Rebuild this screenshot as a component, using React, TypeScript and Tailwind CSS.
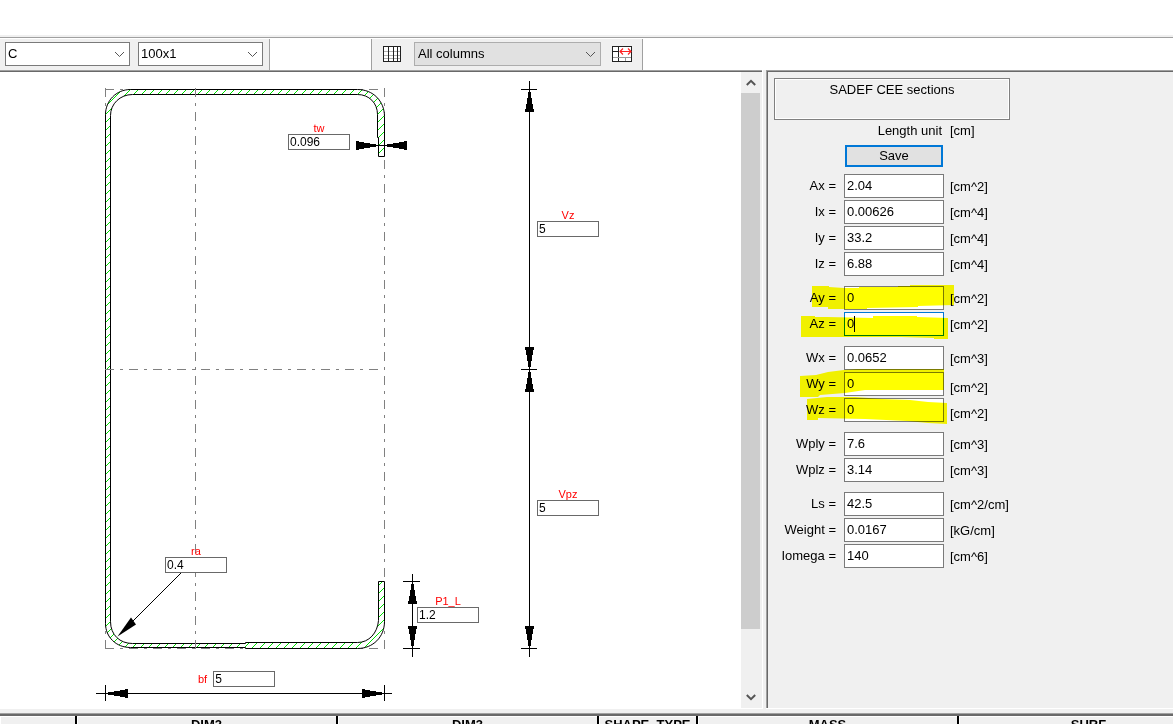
import React from "react";

type Property = {
  label: string;
  value: string;
  unit: string;
  lowUnit?: boolean;
  focused?: boolean;
};

const propertyGroups: Property[][] = [
  [
    { label: "Ax", value: "2.04", unit: "[cm^2]" },
    { label: "Ix", value: "0.00626", unit: "[cm^4]" },
    { label: "Iy", value: "33.2", unit: "[cm^4]" },
    { label: "Iz", value: "6.88", unit: "[cm^4]" },
  ],
  [
    { label: "Ay", value: "0", unit: "[cm^2]" },
    { label: "Az", value: "0", unit: "[cm^2]", focused: true },
  ],
  [
    { label: "Wx", value: "0.0652", unit: "[cm^3]" },
    { label: "Wy", value: "0", unit: "[cm^2]", lowUnit: true },
    { label: "Wz", value: "0", unit: "[cm^2]", lowUnit: true },
  ],
  [
    { label: "Wply", value: "7.6", unit: "[cm^3]" },
    { label: "Wplz", value: "3.14", unit: "[cm^3]" },
  ],
  [
    { label: "Ls", value: "42.5", unit: "[cm^2/cm]" },
    { label: "Weight", value: "0.0167", unit: "[kG/cm]" },
    { label: "Iomega", value: "140", unit: "[cm^6]" },
  ],
];

function Chevron() {
  return (
    <svg
      className="pointer-events-none absolute right-[5px] top-[9px] h-[7px] w-[11px]"
      viewBox="0 0 11 7"
      fill="none"
      stroke="#555"
      strokeWidth="1"
    >
      <path d="M1 1 5.5 5.5 10 1" />
    </svg>
  );
}

function Combo({ label, value, className }: { label: string; value: string; className: string }) {
  return (
    <div className="relative">
      <select
        aria-label={label}
        defaultValue={value}
        className={`block h-6 appearance-none border pr-6 text-[13px] leading-5 text-black outline-none ${className}`}
      >
        <option>{value}</option>
      </select>
      <Chevron />
    </div>
  );
}

function Toolbar() {
  return (
    <div className="flex h-[31px] bg-white">
      <div className="flex w-[270px] items-start gap-2 border-r border-[#a0a0a0] bg-[#f0f0f0] pl-[5px] pt-[3px]">
        <Combo label="Family" value="C" className="w-[125px] border-[#7a7a7a] bg-white pl-[2px]" />
        <Combo label="Section" value="100x1" className="w-[125px] border-[#7a7a7a] bg-white pl-[2px]" />
      </div>
      <div className="ml-[101px] flex w-[272px] items-start border-x border-[#a0a0a0] bg-[#f0f0f0] pl-[11px] pt-[3px]">
        <button aria-label="Table" className="mr-[12px] mt-[4px] block">
          <svg className="h-4 w-[19px]" viewBox="0 0 19 16" shapeRendering="crispEdges">
            <rect x="0.5" y="0.5" width="17" height="15" fill="#fff" stroke="#222" />
            <path d="M1 5.5H17M1 9.5H17M1 12.5H17" stroke="#b0b0b0" />
            <path d="M5.5 1V15M10.5 1V15M14.5 1V15" stroke="#222" />
          </svg>
        </button>
        <Combo label="Columns" value="All columns" className="w-[187px] border-[#adadad] bg-[#e1e1e1] pl-[3px]" />
        <button aria-label="Fit columns" className="ml-[11px] mt-[4px] block">
          <svg className="h-4 w-5" viewBox="0 0 20 16">
            <g shapeRendering="crispEdges">
              <rect x="0.5" y="0.5" width="19" height="15" fill="#fff" stroke="#222" />
              <path d="M1 5.5H7M6.5 1V15" stroke="#222" />
              <path d="M1 11.5H19M13.5 11V15" stroke="#999" />
            </g>
            <path d="M8 5.5H19M11 2.500 8 5.500 11 8.500M16 2.500 19 5.500 16 8.500" fill="none" stroke="#f22" strokeWidth="1.2" />
          </svg>
        </button>
      </div>
    </div>
  );
}

const ARROW = "M-1 2H2V8H3V14H4V19H5V22H-4V19H-3V14H-2V8H-1Z";

const SECTION =
  "M384.5 156.5V116.5C384.5 101 373 89.5 357.5 89.5H130.5C116 89.5 105.5 101 105.5 114.5V623.5C105.5 637 116 647.5 130.5 647.5H245.5V648.5H357.5C373 648.5 384.5 637 384.5 621.5V581.5H378.5V620.5C377.5 633 369 642.5 357.5 642.5H245.5V643.5H132.5C120 643.5 110.5 635 110.5 621.5V115.5C110.5 104 120 94.5 132.5 94.5H357.5C369 94.5 377.5 103 377.5 114.5V137.5H378.5V156.5Z";

function SectionDrawing() {
  return (
    <svg className="block h-[636px] w-[741px]" viewBox="0 72 741 636" fill="none">
      <defs>
        <pattern id="hatch" x="4" y="0" width="8" height="8" patternUnits="userSpaceOnUse">
          <path d="M-1 1 1 -1M0 8 8 0M7 9 9 7" stroke="#00e000" strokeWidth="1" />
        </pattern>
      </defs>
      <g stroke="#808080" strokeDasharray="9 6 3 6" shapeRendering="crispEdges">
        <path d="M105 89.5H385M105 648.5H385" />
        <path d="M105.5 88V649M195.5 88V649M384.5 88V649" />
      </g>
      <path d={SECTION} fill="#fff" />
      <path d={SECTION} fill="url(#hatch)" stroke="#000" />
      <path d="M105 369.5H385" stroke="#808080" strokeDasharray="9 6 3 6" shapeRendering="crispEdges" />
      <path d="M195.5 88V97M195.5 640V649" stroke="#808080" shapeRendering="crispEdges" />

      <g stroke="#000" shapeRendering="crispEdges">
        <path d="M529.5 81V657M521 89.5H537M521 369.5H537M521 648.5H537" />
        <path d="M412.5 574V657M403 581.5H420M403 648.5H420" />
        <path d="M96 693.5H392M105.5 685V701M384.5 685V701" />
        <path d="M356 145.5H407" />
      </g>
      <path d="M181 573 125 629" stroke="#000" />
      <g fill="#000">
        <path d="M117.500 636.500 131 617.500 136 624.500Z" />
        <g shapeRendering="crispEdges">
          <path d={ARROW} transform="translate(529 90)" />
          <path d={ARROW} transform="translate(530 369) rotate(180)" />
          <path d={ARROW} transform="translate(529 370)" />
          <path d={ARROW} transform="translate(530 648) rotate(180)" />
          <path d={ARROW} transform="translate(412 582)" />
          <path d={ARROW} transform="translate(413 648) rotate(180)" />
          <path d={ARROW} transform="translate(106 694) rotate(-90)" />
          <path d={ARROW} transform="translate(384 693) rotate(90)" />
          <path d={ARROW} transform="translate(378 145) rotate(90)" />
          <path d={ARROW} transform="translate(385 146) rotate(-90)" />
        </g>
      </g>
    </svg>
  );
}

const dimensions = [
  { name: "tw", value: "0.096", place: "left-[288px] top-[50px] flex-col" },
  { name: "Vz", value: "5", place: "left-[537px] top-[137px] flex-col" },
  { name: "Vpz", value: "5", place: "left-[537px] top-[416px] flex-col" },
  { name: "ra", value: "0.4", place: "left-[165px] top-[473px] flex-col" },
  { name: "P1_L", value: "1.2", place: "left-[417px] top-[523px] flex-col" },
  { name: "bf", value: "5", place: "left-[198px] top-[599px] gap-[6px]" },
];

function Canvas() {
  return (
    <div className="relative shrink-0 bg-white">
      <SectionDrawing />
      {dimensions.map((d) => (
        <div key={d.name} className={`absolute flex items-center ${d.place}`}>
          <label htmlFor={`dim-${d.name}`} className="text-[11px] leading-[12px] text-[#ff0000]">
            {d.name}
          </label>
          <input
            id={`dim-${d.name}`}
            defaultValue={d.value}
            className="block h-4 w-[62px] border border-[#696969] bg-white pl-px text-[12px] leading-[14px] text-black outline-none"
          />
        </div>
      ))}
    </div>
  );
}

function ScrollBar() {
  return (
    <div className="flex w-[21px] shrink-0 flex-col items-center bg-[#f0f0f0] pr-[2px]">
      <button aria-label="Scroll up" className="flex h-[21px] w-full items-center justify-center">
        <svg className="h-[7px] w-[10px]" viewBox="0 0 10 7" fill="none" stroke="#555" strokeWidth="2">
          <path d="M0.800 6 5 1.800 9.200 6" />
        </svg>
      </button>
      <div className="h-[536px] w-full bg-[#cdcdcd]" />
      <div className="flex-1" />
      <button aria-label="Scroll down" className="flex h-[21px] w-full items-center justify-center">
        <svg className="h-[7px] w-[10px]" viewBox="0 0 10 7" fill="none" stroke="#555" strokeWidth="2">
          <path d="M0.800 1 5 5.200 9.200 1" />
        </svg>
      </button>
    </div>
  );
}

function PropertyRow({ item }: { item: Property }) {
  const id = `prop-${item.label}`;
  return (
    <div className="flex h-6 items-center">
      <label htmlFor={id} className="w-[68px] shrink-0 whitespace-nowrap text-right">
        {item.label} =
      </label>
      <div className="relative ml-2">
        <input
          id={id}
          defaultValue={item.value}
          className={`block h-6 w-[100px] border bg-white pb-px pl-[2px] outline-none ${
            item.focused ? "border-[#0078d7]" : "border-[#7a7a7a]"
          }`}
        />
        {item.focused && <span className="absolute left-[10px] top-[4px] h-4 w-px bg-black" />}
      </div>
      <span className={`ml-[6px] w-[60px] overflow-hidden whitespace-nowrap ${item.lowUnit ? "pt-[7px]" : "pt-px"}`}>
        {item.unit}
      </span>
    </div>
  );
}

function Highlights() {
  return (
    <svg
      className="pointer-events-none absolute left-0 top-0 h-[400px] w-[240px] mix-blend-multiply"
      viewBox="768 72 240 400"
      fill="#ffff00"
    >
      <path d="M812 286H829V287L844 288H859V287H898V286H910V285H954V305L918 306V307L867 308V309H828V307H812Z" />
      <path d="M801 316H815V315V317L827 317L873 318V316H917V317L948 318V339H934V338L901 337H801Z" />
      <path d="M800 376 816 375 828 372 844 370 857 369H944V390H865L845 393 820 395 818 397H800Z" />
      <path d="M807 399 827 397H855L882 399 910 400 928 402 947 403V424L928 423 907 421 865 419 818 418V420H807Z" />
    </svg>
  );
}

function PropertiesPanel() {
  return (
    <div className="relative min-w-0 flex-1 bg-[#f0f0f0] pl-[6px] pt-[6px] text-[13px] leading-[16px]">
      <div className="h-[42px] w-[236px] border border-[#808080] pt-[3px] text-center shadow-[inset_1px_1px_0_#fff,inset_-1px_-1px_0_#fff]">
        SADEF CEE sections
      </div>
      <div className="mt-[3px] flex">
        <span className="w-[168px] text-right">Length unit</span>
        <span className="ml-2">[cm]</span>
      </div>
      <button className="ml-[71px] mt-[6px] block h-[22px] w-[98px] border-2 border-[#0078d7] bg-[#e1e1e1] text-[13px] leading-[18px]">
        Save
      </button>
      <div className="-ml-[6px] mt-[7px] flex flex-col gap-[10px]">
        {propertyGroups.map((group, i) => (
          <div key={i} className="flex flex-col gap-[2px]">
            {group.map((item) => (
              <PropertyRow key={item.label} item={item} />
            ))}
          </div>
        ))}
      </div>
      <Highlights />
    </div>
  );
}

const columns = [
  { name: "", width: "w-[75px]" },
  { name: "DIM2", width: "w-[261px]" },
  { name: "DIM3", width: "w-[261px]" },
  { name: "SHAPE_TYPE", width: "w-[99px]" },
  { name: "MASS", width: "w-[261px]" },
  { name: "SURF", width: "w-[261px]" },
];

function SectionTable() {
  return (
    <table className="w-[1218px] table-fixed border-separate border-spacing-0 bg-[#f0f0f0]">
      <thead>
        <tr>
          {columns.map((c, i) => (
            <th
              key={c.name}
              className={`h-[18px] p-0 text-[13px] font-bold leading-[16px] shadow-[inset_1px_1px_0_#fff] ${c.width} ${
                i > 0 ? "border-l-2 border-black" : ""
              }`}
            >
              {c.name}
            </th>
          ))}
        </tr>
      </thead>
    </table>
  );
}

export default function App() {
  return (
    <div className="h-screen overflow-hidden bg-white font-['Liberation_Sans',Arial,sans-serif] text-black">
      <div className="h-[35px]" />
      <div className="mb-px h-[3px] border-b border-[#a0a0a0] bg-[#f0f0f0]" />
      <Toolbar />
      <div className="flex bg-[#f0f0f0]">
        <div className="flex shrink-0 border-b border-r border-white">
          <div className="border-t border-[#a0a0a0]">
            <div className="flex border-t border-[#696969]">
              <Canvas />
              <ScrollBar />
            </div>
          </div>
        </div>
        <div className="ml-[3px] flex min-w-0 flex-1 border-b border-white">
          <div className="flex min-w-0 flex-1 border-l border-t border-[#a0a0a0]">
            <div className="flex min-w-0 flex-1 border-l border-t border-[#696969]">
              <PropertiesPanel />
            </div>
          </div>
        </div>
      </div>
      <div className="h-[7px] border-b-2 border-[#696969] bg-[#f0f0f0]">
        <div className="h-[5px] border-b border-[#a0a0a0]" />
      </div>
      <SectionTable />
    </div>
  );
}
